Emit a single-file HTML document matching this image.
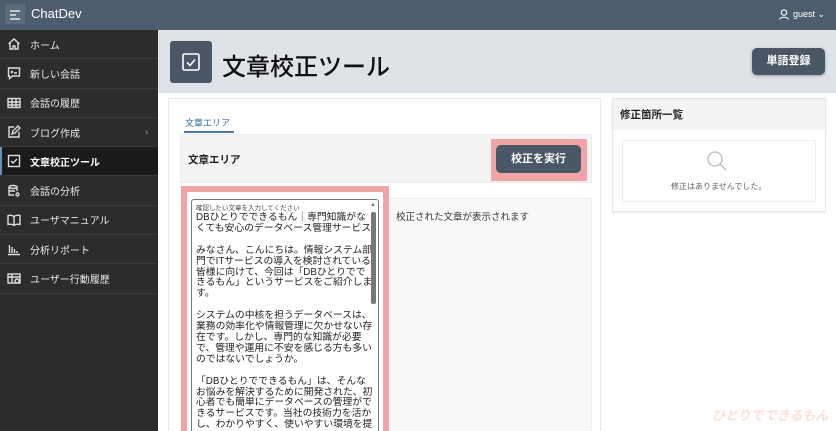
<!DOCTYPE html>
<html><head><meta charset="utf-8"><style>
*{box-sizing:border-box;margin:0;padding:0}
html,body{width:836px;height:431px;overflow:hidden}
body{background:#fff;font-family:"Liberation Sans","Noto Sans CJK JP",sans-serif;position:relative}
.top{position:absolute;left:0;top:0;width:836px;height:30px;background:#4e5d6e}
.side{position:absolute;left:0;top:30px;width:158px;height:401px;background:#2c2c2c}
.it{height:29.3px;display:flex;align-items:center;color:#e8e8e8;font-size:10px;border-bottom:1px solid #3a3a3a;padding-left:7px;position:relative}
.it svg{width:14px;height:14px;margin-right:9px;stroke:#ddd;fill:none;stroke-width:1.4}
.act{background:#1b1b1b;font-weight:bold;color:#fff}
.act:before{content:"";position:absolute;left:0;top:0;width:2px;height:100%;background:#6a8fb5}
.hdr{position:absolute;left:158px;top:30px;width:678px;height:63px;background:#dfe2e6}
.abs{position:absolute}
</style></head><body>
<div class="top">
 <div class="abs" style="left:5px;top:4px;width:20px;height:20px;background:#5c6a7a"></div>
 <svg class="abs" style="left:9px;top:9px" width="12" height="12" stroke="#fff" stroke-width="1.3"><path d="M1 2h10M1 6h6M1 10h10"/></svg>
 <div class="abs" style="left:31px;top:6px;color:#fff;font-size:13px">ChatDev</div>
 <svg class="abs" style="left:779px;top:9px" width="10" height="11" fill="none" stroke="#fff" stroke-width="1.1"><circle cx="5" cy="3.5" r="2.7"/><path d="M0.5 10.5c1-3 8-3 9 0"/></svg>
 <div class="abs" style="left:793px;top:9px;color:#fff;font-size:9px">guest ⌄</div>
</div>
<div class="side">
 <div class="it"><svg viewBox="0 0 14 14"><path d="M1.5 7L7 2l5.5 5M3 6v6h3V9h2v3h3V6"/></svg>ホーム</div>
 <div class="it"><svg viewBox="0 0 14 14"><path d="M1.5 2h11v8h-7l-3 2.5V10h-1z"/><path d="M4 5l1.5 1L4 7M7 7h3"/></svg>新しい会話</div>
 <div class="it"><svg viewBox="0 0 14 14"><rect x="1" y="2.5" width="12" height="9"/><path d="M1 6h12M1 9h12M5 2.5v9M9 2.5v9"/></svg>会話の履歴</div>
 <div class="it"><svg viewBox="0 0 14 14"><path d="M7 2H2v10h10V7M5 9l1-3 5-5 2 2-5 5z"/></svg>ブログ作成<span style="position:absolute;left:145px;color:#999">›</span></div>
 <div class="it act"><svg viewBox="0 0 14 14"><rect x="1.5" y="1.5" width="11" height="11"/><path d="M4 7l2 2 4-4"/></svg>文章校正ツール</div>
 <div class="it"><svg viewBox="0 0 14 14"><ellipse cx="6" cy="3" rx="4" ry="1.5"/><path d="M2 3v8h5M10 3v4M2 7h6"/><circle cx="10.5" cy="10.5" r="1.5"/></svg>会話の分析</div>
 <div class="it"><svg viewBox="0 0 14 14"><path d="M7 3.5C5 2 3 2 1 2.5v9c2-.5 4-.5 6 1 2-1.5 4-1.5 6-1v-9c-2-.5-4-.5-6 1zM7 3.5v9"/></svg>ユーザマニュアル</div>
 <div class="it"><svg viewBox="0 0 14 14"><path d="M1 12.5h12M2.5 11V3M5 11V5M7.5 11V7M10 11V9"/></svg>分析リポート</div>
 <div class="it"><svg viewBox="0 0 14 14"><rect x="1" y="2" width="12" height="9"/><path d="M1 5h12M5 2v9"/><circle cx="10" cy="9" r="2"/></svg>ユーザー行動履歴</div>
</div>
<div class="hdr">
 <div class="abs" style="left:12px;top:11px;width:42px;height:42px;background:#4a5766;border-radius:3px"></div>
 <svg class="abs" style="left:24px;top:23px" width="18" height="18" fill="none" stroke="#fff" stroke-width="1.6"><rect x="1" y="1" width="16" height="16" rx="1.5"/><path d="M5 9.5l3 3 5-6"/></svg>
 <div class="abs" style="left:64px;top:17px;font-size:24px;color:#111;font-weight:500">文章校正ツール</div>
 <div class="abs" style="left:594px;top:18px;width:73px;height:27px;background:#4a5766;border-radius:5px;color:#fff;font-size:11px;font-weight:bold;text-align:center;line-height:27px;box-shadow:0 1px 3px rgba(0,0,0,.3)">単語登録</div>
</div>
<div class="abs" style="left:168px;top:98px;width:433px;height:333px;border:1px solid #e8e8e8;border-bottom:none"></div>
<div class="abs" style="left:185px;top:116px;font-size:9px;color:#3c6fa0">文章エリア</div>
<div class="abs" style="left:184px;top:131px;width:50px;height:2px;background:#4a7bab"></div>
<div class="abs" style="left:180px;top:134px;width:412px;height:49px;background:#f4f4f4;border:1px solid #ececec"></div>
<div class="abs" style="left:188px;top:152px;font-size:10.5px;font-weight:bold;color:#222">文章エリア</div>
<div class="abs" style="left:491px;top:139px;width:96px;height:42px;background:#f0a4a6"></div>
<div class="abs" style="left:496px;top:145px;width:85px;height:28px;background:#4a5766;border-radius:5px;color:#fff;font-size:11px;font-weight:bold;text-align:center;line-height:28px">校正を実行</div>
<div class="abs" style="left:181px;top:186px;width:208px;height:245px;background:#f0a4a6"></div>
<div class="abs" style="left:187px;top:192px;width:196px;height:239px;background:#fff"></div>
<div class="abs" style="left:191px;top:199px;width:188px;height:232px;border:1px solid #777;border-bottom:none;border-radius:3px 3px 0 0;background:#fff;overflow:hidden">
 <div style="position:absolute;right:2px;top:12px;width:5px;height:92px;background:#777;border-radius:2px"></div>
 <div style="position:absolute;right:2px;top:2px;font-size:6px;color:#777">▲</div>
 <div style="padding:4px 0 0 4px;font-size:9.8px;line-height:10.9px;color:#222;white-space:nowrap">
  <div style="font-size:6.5px;line-height:9px;color:#444">確認したい文章を入力してください</div>
  DBひとりでできるもん｜専門知識がな<br>くても安心のデータベース管理サービス<br><br>みなさん、こんにちは。情報システム部<br>門でITサービスの導入を検討されている<br>皆様に向けて、今回は「DBひとりでで<br>きるもん」というサービスをご紹介しま<br>す。<br><br>システムの中核を担うデータベースは、<br>業務の効率化や情報管理に欠かせない存<br>在です。しかし、専門的な知識が必要<br>で、管理や運用に不安を感じる方も多い<br>のではないでしょうか。<br><br>「DBひとりでできるもん」は、そんな<br>お悩みを解決するために開発された、初<br>心者でも簡単にデータベースの管理がで<br>きるサービスです。当社の技術力を活か<br>し、わかりやすく、使いやすい環境を提
 </div>
</div>
<div class="abs" style="left:390px;top:198px;width:202px;height:233px;background:#f8f8f8;border:1px solid #eee;border-bottom:none"></div>
<div class="abs" style="left:396px;top:209px;font-size:9.5px;color:#333">校正された文章が表示されます</div>
<div class="abs" style="left:612px;top:98px;width:214px;height:114px;border:1px solid #e6e6e6;box-shadow:0 1px 2px rgba(0,0,0,.08)"></div>
<div class="abs" style="left:613px;top:99px;width:212px;height:31px;background:#f4f4f4"></div>
<div class="abs" style="left:620px;top:107px;font-size:10.5px;font-weight:bold;color:#222">修正箇所一覧</div>
<div class="abs" style="left:622px;top:140px;width:194px;height:62px;border:1px solid #eee"></div>
<svg class="abs" style="left:706px;top:150px" width="22" height="22" fill="none" stroke="#bbb" stroke-width="1.3"><circle cx="9" cy="9" r="7"/><path d="M14 14l6 6"/></svg>
<div class="abs" style="left:671px;top:181px;font-size:8px;color:#666">修正はありませんでした。</div>
<div class="abs" style="left:712px;top:405px;font-size:13px;font-weight:bold;color:#fbe0d6;font-style:italic;white-space:nowrap">ひとりでできるもん</div>
</body></html>
